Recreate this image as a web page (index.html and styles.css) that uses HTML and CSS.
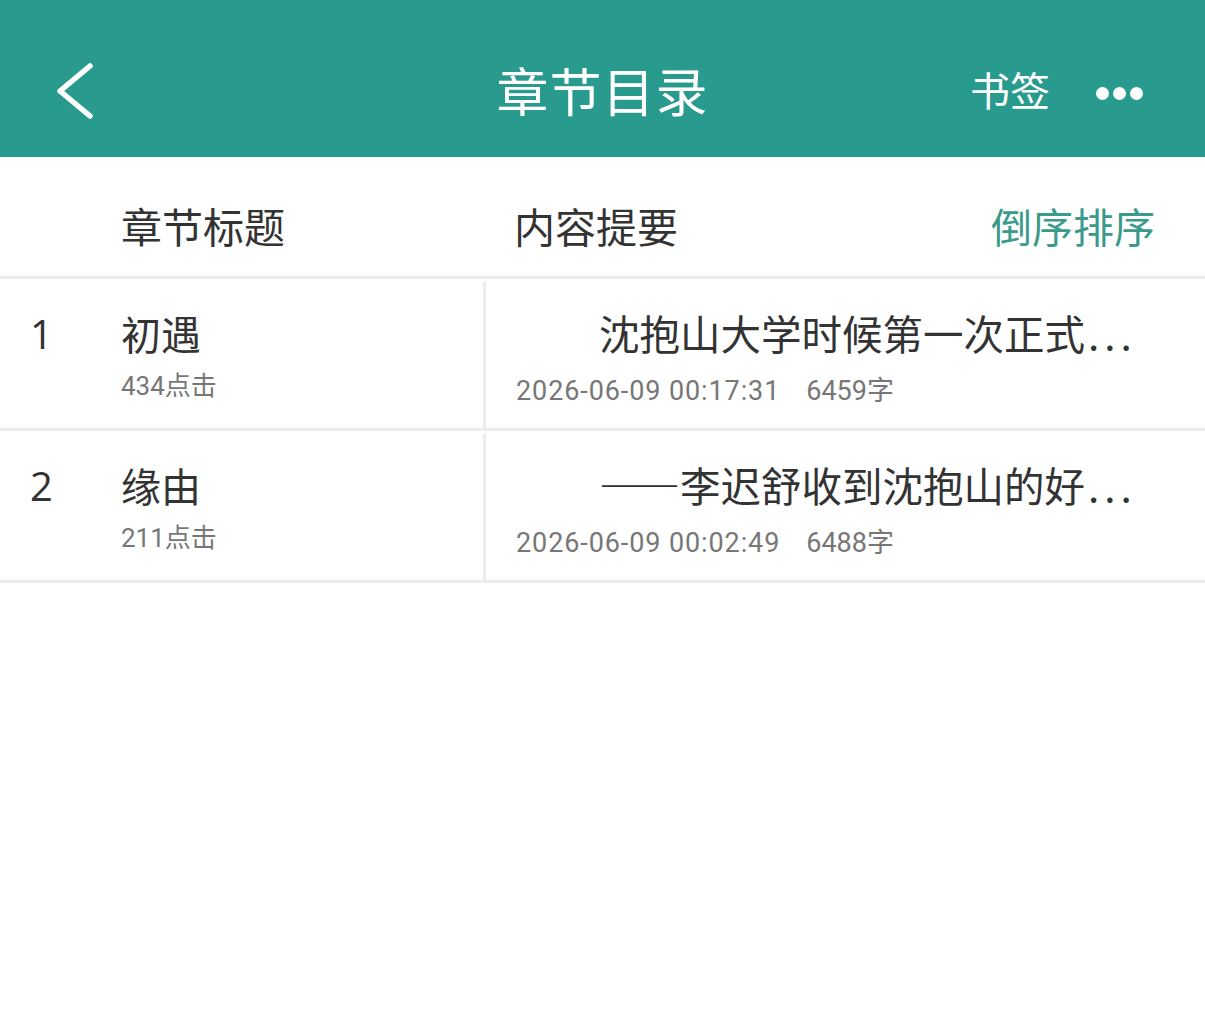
FILE: index.html
```html
<!DOCTYPE html>
<html lang="zh-CN">
<head>
  <meta charset="UTF-8" />
  <meta name="viewport" content="width=device-width, initial-scale=1.0" />
  <title>章节目录</title>
  <link rel="stylesheet" href="styles.css">
</head>
<body>
  <header class="topbar">
    <a class="back" href="#">
      <svg width="40" height="60" viewBox="0 0 40 60">
        <polyline points="34,6 4,31 34,56" fill="none" stroke="#fff" stroke-width="5.5" stroke-linecap="round" stroke-linejoin="round"/>
      </svg>
    </a>
    <h1 class="title">章节目录</h1>
    <div class="actions">
      <span class="bookmark">书签</span>
      <span class="more"><i></i><i></i><i></i></span>
    </div>
  </header>

  <div class="list-head">
    <div class="col-left">章节标题</div>
    <div class="col-right">
      <span>内容提要</span>
      <a class="sort" href="#">倒序排序</a>
    </div>
  </div>

  <div class="chapter">
    <div class="col-left">
      <span class="num">1</span>
      <div class="name-box">
        <div class="name">初遇</div>
        <div class="hits">434点击</div>
      </div>
    </div>
    <div class="col-right">
      <div class="summary">沈抱山大学时候第一次正式<span class="dots">...</span></div>
      <div class="meta">2026-06-09 00:17:31<span class="words">6459字</span></div>
    </div>
  </div>

  <div class="chapter">
    <div class="col-left">
      <span class="num">2</span>
      <div class="name-box">
        <div class="name">缘由</div>
        <div class="hits">211点击</div>
      </div>
    </div>
    <div class="col-right">
      <div class="summary">——李迟舒收到沈抱山的好<span class="dots">...</span></div>
      <div class="meta">2026-06-09 00:02:49<span class="words">6488字</span></div>
    </div>
  </div>
</body>
</html>
```

FILE: styles.css
```css
:root {
  --teal: #289b8e;
  --accent: #3a9a8b;
  --text: #333;
  --muted: #777;
  --line: #ececec;
}

body {
  margin: 0;
  font-family: "Noto Sans CJK SC", "Noto Sans", sans-serif;
  color: var(--text);
  background: #fff;
}

.topbar {
  height: 157px;
  box-sizing: border-box;
  padding-top: 20px;
  background: var(--teal);
  display: grid;
  grid-template-columns: 1fr auto 1fr;
  align-items: center;
  color: #fff;
}

.back {
  display: flex;
  padding-left: 56px;
  padding-top: 2px;
}

.title {
  margin: 0;
  font-size: 52px;
  font-weight: normal;
  letter-spacing: 1px;
  padding-top: 2px;
}

.actions {
  display: flex;
  justify-content: flex-end;
  align-items: center;
  padding-right: 62px;
}

.bookmark {
  font-size: 40px;
  margin-right: 46px;
}

.more {
  display: flex;
  gap: 4px;
  padding-top: 9px;
}

.more i {
  width: 13px;
  height: 13px;
  border-radius: 50%;
  background: #fff;
}

.list-head,
.chapter {
  display: flex;
  border-bottom: 3px solid var(--line);
}

.list-head {
  height: 119px;
  align-items: center;
  font-size: 41px;
}

.list-head .col-left {
  width: 483px;
  box-sizing: border-box;
  padding-left: 121px;
  padding-top: 16px;
}

.list-head .col-right {
  flex: 1;
  display: flex;
  justify-content: space-between;
  padding-left: 31px;
  padding-right: 50px;
  padding-top: 16px;
}

.sort {
  color: var(--accent);
  text-decoration: none;
}

.chapter {
  height: 149px;
}

.chapter .col-left {
  width: 483px;
  flex-shrink: 0;
  display: flex;
  border-right: 3px solid var(--line);
  margin-top: 3px;
}

.num {
  width: 121px;
  box-sizing: border-box;
  padding-left: 30px;
  padding-top: 24px;
  font-size: 40px;
  font-family: "Open Sans", "Noto Sans", sans-serif;
}

.name-box {
  padding-top: 23px;
}

.name {
  font-size: 40px;
  line-height: 56px;
}

.hits {
  font-size: 26px;
  font-family: Roboto, "Noto Sans CJK SC", sans-serif;
  color: var(--muted);
  margin-top: 4px;
}

.chapter .col-right {
  flex: 1;
  min-width: 0;
  padding: 26px 40px 0 30px;
}

.summary {
  font-size: 40.5px;
  line-height: 56px;
  text-indent: 2.05em;
  white-space: nowrap;
}

.dots {
  letter-spacing: 5px;
  margin-left: 3px;
}

.meta {
  font-size: 27px;
  font-family: Roboto, "Noto Sans CJK SC", sans-serif;
  color: var(--muted);
  margin-top: 8px;
  letter-spacing: 0.9px;
}

.words {
  margin-left: 26px;
  letter-spacing: 0;
}
```
